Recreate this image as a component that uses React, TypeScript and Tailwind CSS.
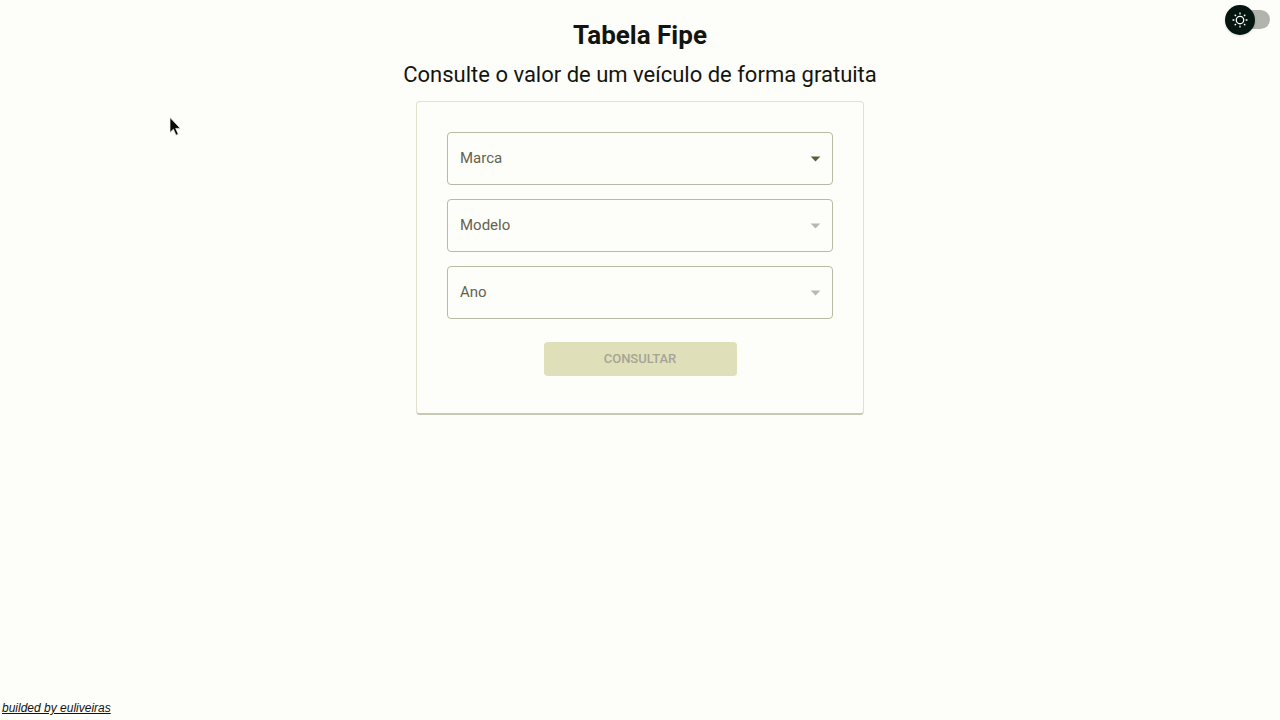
import { useState } from "react";

type FieldProps = { id: string; label: string; options: string[]; disabled?: boolean };

function SelectField({ id, label, options, disabled = false }: FieldProps) {
  const [value, setValue] = useState("");
  return (
    <div className="grid items-center">
      <select
        id={id}
        value={value}
        disabled={disabled}
        onChange={(event) => setValue(event.target.value)}
        className="col-start-1 row-start-1 h-[53px] w-full appearance-none rounded border border-[#b9b9a6] bg-transparent px-3 text-[15px] text-[#1c1c14] opacity-100"
      >
        <option value="" />
        {options.map((option) => (
          <option key={option}>{option}</option>
        ))}
      </select>
      {value === "" && (
        <label
          htmlFor={id}
          className="pointer-events-none col-start-1 row-start-1 justify-self-start pl-[13px] text-[15px] text-[#63634f]"
        >
          {label}
        </label>
      )}
      <svg
        viewBox="0 0 24 24"
        aria-hidden="true"
        className={
          disabled
            ? "pointer-events-none col-start-1 row-start-1 mr-[6px] size-[23px] justify-self-end fill-[#b8b8ac]"
            : "pointer-events-none col-start-1 row-start-1 mr-[6px] size-[23px] justify-self-end fill-[#5c5c3c]"
        }
      >
        <path d="M7 10l5 5 5-5z" />
      </svg>
    </div>
  );
}

function ThemeSwitch() {
  return (
    <label className="relative flex h-[19px] w-[45px] cursor-pointer items-center justify-end">
      <input
        type="checkbox"
        role="switch"
        aria-label="Alternar tema"
        className="h-[19px] w-10 appearance-none rounded-full bg-[#b1b3ad]"
      />
      <span className="absolute -top-[5px] left-0 flex size-[30px] items-center justify-center rounded-full bg-[#04160f] shadow-sm">
        <svg viewBox="0 0 20 20" aria-hidden="true" className="size-[18px] fill-white">
          <path d="M9.305 1.667V3.75h1.389V1.667h-1.39zm-4.707 1.95l-.982.982L5.09 6.072l.982-.982-1.473-1.473zm10.802 0L13.927 5.09l.982.982 1.473-1.473-.982-.982zM10 5.139a4.872 4.872 0 00-4.862 4.86A4.872 4.872 0 0010 14.862 4.872 4.872 0 0014.86 10 4.872 4.872 0 0010 5.139zm0 1.389A3.462 3.462 0 0113.471 10a3.462 3.462 0 01-3.473 3.472A3.462 3.462 0 016.527 10 3.462 3.462 0 0110 6.528zM1.665 9.305v1.39h2.083v-1.39H1.666zm14.583 0v1.39h2.084v-1.39h-2.084zM5.09 13.928L3.616 15.4l.982.982 1.473-1.473-.982-.982zm9.82 0l-.982.982 1.473 1.473.982-.982-1.473-1.473zM9.305 16.25v2.083h1.389V16.25h-1.39z" />
        </svg>
      </span>
    </label>
  );
}

export default function App() {
  return (
    <div className="relative flex min-h-screen flex-col bg-[#fdfdf9] font-['Roboto',sans-serif] text-[#14140f]">
      <header className="grid grid-cols-[1fr_auto_1fr]">
        <div className="col-start-2 pt-5 text-center">
          <h1 className="text-[26px] leading-[30px] font-bold">Tabela Fipe</h1>
          <h2 className="mt-2 text-[22px] leading-[34px]">Consulte o valor de um veículo de forma gratuita</h2>
        </div>
        <div className="flex justify-end pt-[10px] pr-[10px]">
          <ThemeSwitch />
        </div>
      </header>

      <main className="flex flex-1 flex-col items-center pt-[9px]">
        <form className="flex w-full max-w-md flex-col gap-[14px] rounded border border-b-2 border-[#e1e1cd] border-b-[#c8c8b4] px-[30px] pt-[30px] pb-[37px]">
          <SelectField id="marca" label="Marca" options={["Fiat", "Ford", "Honda"]} />
          <SelectField id="modelo" label="Modelo" options={[]} disabled />
          <SelectField id="ano" label="Ano" options={[]} disabled />
          <button
            type="submit"
            disabled
            className="mt-[9px] h-[34px] w-1/2 self-center rounded bg-[#dfdfb9] text-[13px] font-medium text-[#a5a597]"
          >
            CONSULTAR
          </button>
        </form>
      </main>

      <footer className="px-[2px] pb-1 font-['Liberation_Sans',sans-serif] text-xs leading-4">
        <a href="#autor" className="italic underline">
          builded by euliveiras
        </a>
      </footer>

      <svg
        viewBox="0 0 12 19"
        aria-hidden="true"
        className="pointer-events-none absolute top-[117px] left-[169px] h-[19px] w-3"
      >
        <path d="M1 0.5v15l3.4-3.3 2.6 6 2.3-1-2.6-5.8h4.6z" fill="#0a0a0a" stroke="#f6f6ee" strokeWidth="0.7" />
      </svg>
    </div>
  );
}
